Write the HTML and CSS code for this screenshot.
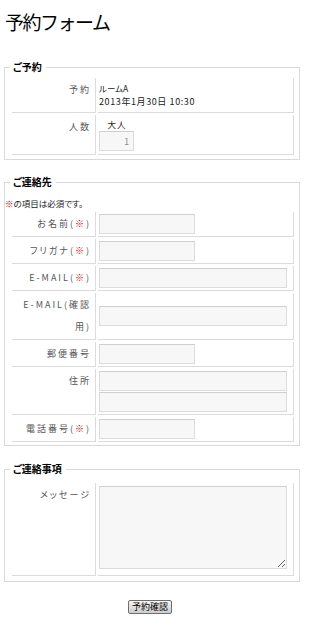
FILE: index.html
```html
<!DOCTYPE html>
<html lang="ja">
<head>
<meta charset="utf-8">
<title>予約フォーム</title>
<link rel="stylesheet" href="styles.css">
</head>
<body>
<div class="page">
  <h1 class="title">予約フォーム</h1>
  <form class="form" action="#" onsubmit="return false;">
    <fieldset class="box box-first">
      <legend class="box-legend">ご予約</legend>
      <table class="grid grid-res">
        <tr>
          <th class="lab">予約</th>
          <td class="val val-text"><div>ルームA</div><div class="date">2013年1月30日 10:30</div></td>
        </tr>
        <tr>
          <th class="lab">人数</th>
          <td class="val val-count">
            <div class="count">
              <div class="count-label">大人</div>
              <input class="field field-count" type="text" value="1" readonly>
            </div>
          </td>
        </tr>
      </table>
    </fieldset>

    <fieldset class="box box-contact">
      <legend class="box-legend">ご連絡先</legend>
      <p class="notice"><span class="req">※</span>の項目は必須です。</p>
      <table class="grid grid-contact">
        <tr>
          <th class="lab">お名前(<span class="req">※</span>)</th>
          <td class="val val-input"><input class="field field-short" type="text"></td>
        </tr>
        <tr>
          <th class="lab">フリガナ(<span class="req">※</span>)</th>
          <td class="val val-input"><input class="field field-short" type="text"></td>
        </tr>
        <tr>
          <th class="lab">E-MAIL(<span class="req">※</span>)</th>
          <td class="val val-input"><input class="field field-long" type="text"></td>
        </tr>
        <tr>
          <th class="lab">E-MAIL(確認用)</th>
          <td class="val val-input"><input class="field field-long" type="text"></td>
        </tr>
        <tr>
          <th class="lab">郵便番号</th>
          <td class="val val-input"><input class="field field-short" type="text"></td>
        </tr>
        <tr>
          <th class="lab">住所</th>
          <td class="val val-input"><input class="field field-long" type="text"><input class="field field-long field-next" type="text"></td>
        </tr>
        <tr>
          <th class="lab">電話番号(<span class="req">※</span>)</th>
          <td class="val val-input"><input class="field field-short" type="text"></td>
        </tr>
      </table>
    </fieldset>

    <fieldset class="box box-last">
      <legend class="box-legend">ご連絡事項</legend>
      <table class="grid grid-msg">
        <tr>
          <th class="lab">メッセージ</th>
          <td class="val val-area"><textarea class="area"></textarea></td>
        </tr>
      </table>
    </fieldset>

    <div class="actions">
      <button class="btn" type="button">予約確認</button>
    </div>
  </form>
</div>
</body>
</html>
```

FILE: styles.css
```css
* {
  box-sizing: border-box;
}

html,
body {
  margin: 0;
  padding: 0;
  background: #fff;
}

body {
  font-family: "Noto Sans CJK JP", "Noto Sans", sans-serif;
  font-size: 8px;
  color: #333;
  font-feature-settings: "palt";
}

.page {
  width: 300px;
  padding: 10px 0 0 4px;
}

.title {
  margin: 0 0 0 1px;
  font-size: 19px;
  line-height: 24px;
  letter-spacing: -1.5px;
  font-weight: normal;
  color: #000;
  font-feature-settings: normal;
}

.form {
  margin: 0;
}

.box {
  width: 296px;
  min-width: 0;
  margin: 16px 0 0;
  padding: 0 0 1px;
  border: 1px solid #d9d9d9;
}

.box-first {
  margin-top: 27px;
}

.box-last {
  margin-top: 17px;
  padding-bottom: 3px;
}

.box-legend {
  margin-left: 5px;
  padding: 0 4px 0 3px;
  font-size: 10px;
  line-height: 12px;
  font-weight: bold;
  color: #000;
}

.grid {
  border-collapse: separate;
  border-spacing: 2px;
  margin: 0 0 0 5px;
}

.grid-res {
  margin-top: 3px;
  margin-bottom: 1px;
}

.grid-contact {
  margin-top: 0;
}

.grid-msg {
  margin-top: 6px;
}

.notice {
  margin: 8px 0 0;
  font-size: 8.5px;
  line-height: 14px;
  color: #222;
}

.req {
  color: #cc0000;
}

.lab {
  width: 84px;
  padding: 1px 4px 1px 4px;
  text-align: right;
  vertical-align: top;
  font-size: 9px;
  font-weight: normal;
  color: #555;
  letter-spacing: 2px;
  line-height: 22px;
  border-right: 1px solid #dcdcdc;
  border-bottom: 1px solid #dcdcdc;
}

.val {
  width: 196px;
  border-right: 1px solid #dcdcdc;
  border-bottom: 1px solid #dcdcdc;
}

.val-text {
  padding: 4px 2px 4px 1px;
  font-size: 8.5px;
  line-height: 13px;
  vertical-align: top;
  color: #222;
}

.date {
  font-size: 9px;
  letter-spacing: 0.6px;
}

.val-count {
  padding: 3px 1px;
  vertical-align: top;
}

.count {
  width: 35px;
}

.count-label {
  font-size: 8.5px;
  line-height: 13px;
  text-align: center;
  letter-spacing: 1px;
  padding-left: 1px;
  color: #222;
}

.val-input {
  padding: 2px 1px;
  vertical-align: middle;
}

.val-area {
  padding: 3px 1px 6px;
  vertical-align: top;
}

.field {
  display: block;
  height: 20px;
  margin: 0;
  padding: 0 3px;
  border: 1px solid #dcdcdc;
  border-top-color: #cfcfcf;
  background: #f7f7f7;
  font-family: "Noto Sans CJK JP", "Noto Sans", sans-serif;
  font-size: 8.5px;
  color: #888;
  outline: none;
}

.field-count {
  width: 35px;
  text-align: right;
  padding-right: 4px;
}

.field-short {
  width: 96px;
}

.field-long {
  width: 188px;
}

.field-next {
  margin-top: 1px;
}

.area {
  display: block;
  width: 188px;
  height: 83px;
  margin: 0;
  padding: 2px 3px;
  border: 1px solid #dcdcdc;
  border-top-color: #cfcfcf;
  background: #f7f7f7;
  font-family: "Noto Sans CJK JP", "Noto Sans", sans-serif;
  font-size: 8px;
  color: #333;
}

.actions {
  width: 296px;
  margin-top: 18px;
  padding-right: 4px;
  text-align: center;
}

.btn {
  height: 14px;
  margin: 0;
  padding: 0 3px;
  border: 1px solid #6e6e6e;
  border-radius: 2px;
  background: linear-gradient(#f4f4f4, #cdcdcd);
  font-family: "Noto Sans CJK JP", "Noto Sans", sans-serif;
  font-size: 9px;
  line-height: 12px;
  color: #000;
  font-feature-settings: normal;
}
```
